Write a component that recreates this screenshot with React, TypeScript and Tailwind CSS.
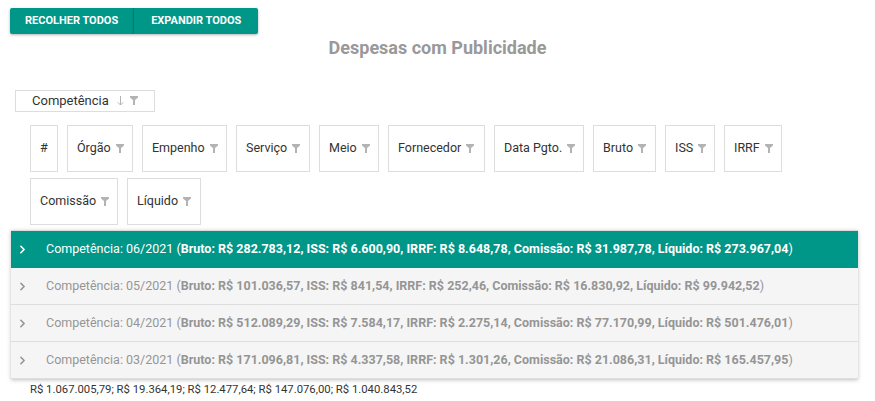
import { ChevronRight } from "lucide-react";

const columns = [
  { label: "#", filter: false, w: "w-[28px]" },
  { label: "Órgão", filter: true, w: "w-[66px]" },
  { label: "Empenho", filter: true, w: "w-[85px]" },
  { label: "Serviço", filter: true, w: "w-[74px]" },
  { label: "Meio", filter: true, w: "w-[60px]" },
  { label: "Fornecedor", filter: true, w: "w-[97px]" },
  { label: "Data Pgto.", filter: true, w: "w-[90px]" },
  { label: "Bruto", filter: true, w: "w-[63px]" },
  { label: "ISS", filter: true, w: "w-[50px]" },
  { label: "IRRF", filter: true, w: "w-[58px]" },
  { label: "Comissão", filter: true, w: "w-[88px]" },
  { label: "Líquido", filter: true, w: "w-[74px]" },
];

const groups = [
  { comp: "06/2021", bruto: "282.783,12", iss: "6.600,90", irrf: "8.648,78", comissao: "31.987,78", liquido: "273.967,04" },
  { comp: "05/2021", bruto: "101.036,57", iss: "841,54", irrf: "252,46", comissao: "16.830,92", liquido: "99.942,52" },
  { comp: "04/2021", bruto: "512.089,29", iss: "7.584,17", irrf: "2.275,14", comissao: "77.170,99", liquido: "501.476,01" },
  { comp: "03/2021", bruto: "171.096,81", iss: "4.337,58", irrf: "1.301,26", comissao: "21.086,31", liquido: "165.457,95" },
];

function Funnel() {
  return (
    <svg width="8" height="9" viewBox="0 0 8 9" className="shrink-0">
      <path d="M0 0h8v1.5L5 4v5H3V4L0 1.5z" fill="#b3b3b3" />
    </svg>
  );
}

function SortDown() {
  return (
    <svg width="7" height="10" viewBox="0 0 7 10" className="shrink-0">
      <path d="M3.5 0v9M0.8 6.3L3.5 9l2.7-2.7" stroke="#b3b3b3" strokeWidth="1" fill="none" />
    </svg>
  );
}

export default function App() {
  return (
    <div className="min-h-[401px] bg-white text-[#333] font-['Roboto',sans-serif]">
      {/* Toolbar */}
      <div className="flex pt-2 pl-[10px]">
        <button className="h-[26px] px-[15px] bg-[#009688] text-white text-[11px] font-bold rounded-l-[2px] shadow-[0_1px_3px_rgba(0,0,0,0.3)] border-r border-[#00897b]">
          RECOLHER TODOS
        </button>
        <button className="h-[26px] px-[17px] bg-[#009688] text-white text-[11px] font-bold rounded-r-[2px] shadow-[0_1px_3px_rgba(0,0,0,0.3)]">
          EXPANDIR TODOS
        </button>
      </div>

      <h2 className="text-center text-[18px] font-bold text-[#999] mt-[2px] leading-[24px]">Despesas com Publicidade</h2>

      {/* Group panel */}
      <div className="pl-[15px] mt-[28px]">
        <div className="inline-flex items-center h-[22px] w-[140px] pl-[16px] border border-[#ddd] text-[13px]">
          <span>Competência</span>
          <span className="ml-[8px]"><SortDown /></span>
          <span className="ml-[6px]"><Funnel /></span>
        </div>
      </div>

      {/* Column headers */}
      <div className="flex flex-wrap gap-x-[9px] gap-y-[6px] pl-[30px] pr-[17px] mt-[13px]">
        {columns.map((c) => (
          <div
            key={c.label}
            className={`flex items-center gap-[5px] h-[47px] px-[9px] border border-[#ddd] text-[12.5px] text-[#333] whitespace-nowrap ${c.w}`}
          >
            <span>{c.label}</span>
            {c.filter && <Funnel />}
          </div>
        ))}
      </div>

      {/* Grouped rows */}
      <div className="mx-[11px] mt-[5px] w-[847px] border-t border-[#ddd] shadow-[0_1px_4px_rgba(0,0,0,0.25)]">
        {groups.map((g, i) => {
          const active = i === 0;
          return (
            <div
              key={g.comp}
              className={`flex items-center h-[37px] text-[12.5px] border-b ${
                active ? "bg-[#009688] text-white border-[#009688]" : "bg-[#f5f5f5] text-[#959595] border-[#ddd]"
              }`}
            >
              <ChevronRight className="ml-[5px] w-[13px] h-[13px]" strokeWidth={3} />
              <span className="ml-[17px] whitespace-nowrap">
                Competência: {g.comp} (
                <span className="font-bold">
                  Bruto: R$ {g.bruto}, ISS: R$ {g.iss}, IRRF: R$ {g.irrf}, Comissão: R$ {g.comissao}, Líquido: R$ {g.liquido}
                </span>
                )
              </span>
            </div>
          );
        })}
      </div>

      <div className="pl-[30px] mt-[3px] text-[11.3px] text-[#333]">
        R$ 1.067.005,79; R$ 19.364,19; R$ 12.477,64; R$ 147.076,00; R$ 1.040.843,52
      </div>
    </div>
  );
}
